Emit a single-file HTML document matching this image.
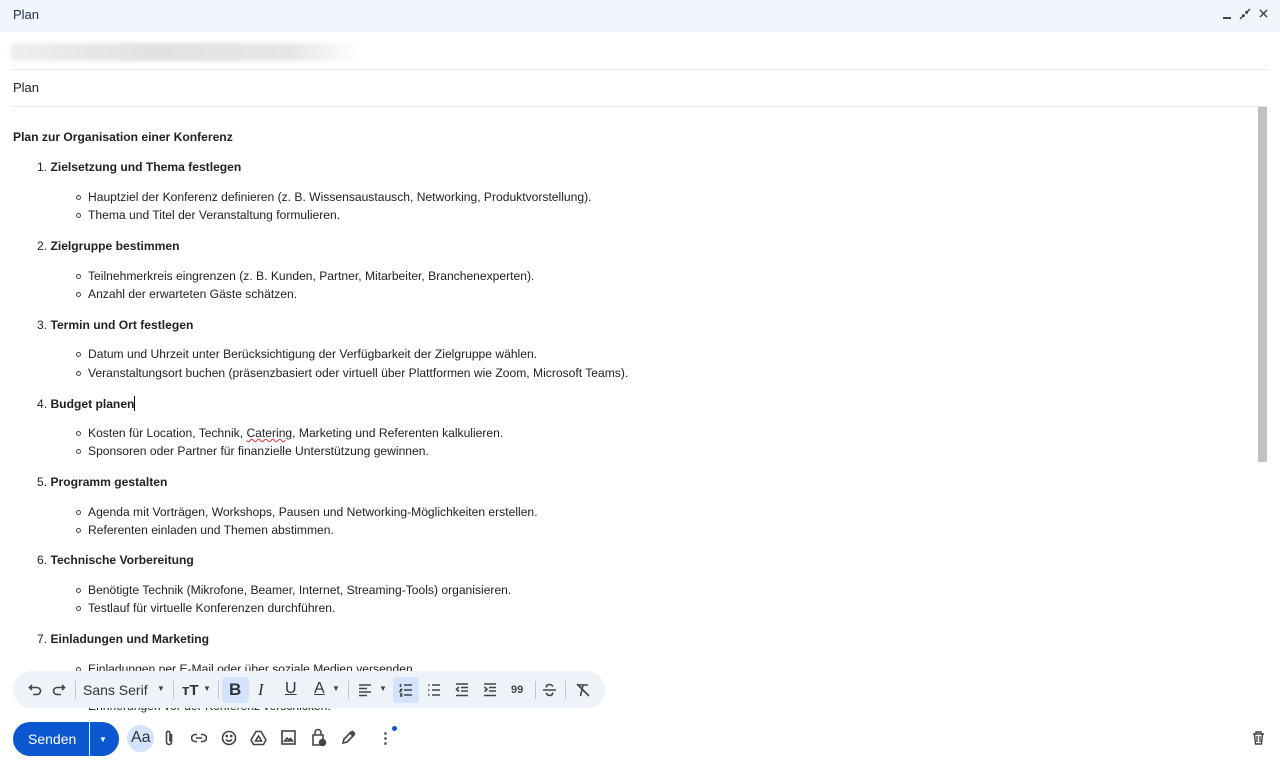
<!DOCTYPE html>
<html><head><meta charset="utf-8"><style>
*{margin:0;padding:0;box-sizing:border-box}
body{width:1280px;height:766px;overflow:hidden;background:#fff;font-family:"Liberation Sans",Arial,sans-serif;position:relative;color:#222}
.hdr{position:absolute;left:0;top:0;width:1280px;height:32px;background:#f2f6fc}
.hdr .t{position:absolute;left:13px;top:7px;font-size:13px;color:#1f3050}
.l{position:absolute;font-size:12.1px;white-space:nowrap;color:#222}
.b{font-weight:bold}
.bul{position:absolute;width:5px;height:5px;border:1px solid #444;border-radius:50%}
.sep{position:absolute;left:13px;width:1254px;height:1px;background:#e5e5e5}
.tb{position:absolute;left:13px;top:671px;width:592px;height:37px;background:#eef2f9;border-radius:19px}
.ic{position:absolute;font-size:15px;color:#444}
.vs{position:absolute;top:681px;width:1px;height:18px;background:#c4c7c5}
svg.s{position:absolute}
svg.s path,svg.s rect,svg.s circle{stroke:#444;stroke-width:1.6;fill:none}
</style></head><body>
<div class="hdr"><div class="t">Plan</div>
<div style="position:absolute;left:1223px;top:17px;width:8px;height:2px;background:#444"></div>
<svg style="position:absolute;left:1239px;top:8px" width="12" height="12" viewBox="0 0 12 12"><path d="M1 11 5 7M3 7h2v2M11 1 7 5M7 3v2h2" stroke="#444" stroke-width="1.5" fill="none"/></svg>
<svg style="position:absolute;left:1259px;top:9px" width="9" height="9" viewBox="0 0 10 10"><path d="M1 1 9 9M9 1 1 9" stroke="#444" stroke-width="1.6"/></svg>
</div>
<div style="position:absolute;left:10px;top:43px;width:350px;height:18px;background:linear-gradient(90deg,#eee,#e2e2e2 40%,#e6e6e6 80%,#fff);filter:blur(2px);border-radius:4px"></div>
<div class="sep" style="top:69px"></div>
<div class="l" style="left:13px;top:80px;font-size:13px">Plan</div>
<div class="sep" style="top:106px"></div>
<div style="position:absolute;left:1258px;top:107px;width:9px;height:355px;background:#c1c1c1"></div>
<div class="l b" style="left:13px;top:130px">Plan zur Organisation einer Konferenz</div>

<div class="l" style="left:37px;top:160px">1. <b>Zielsetzung und Thema festlegen</b></div>
<div class="bul" style="left:76px;top:195px"></div><div class="l" style="left:88px;top:190px">Hauptziel der Konferenz definieren (z. B. Wissensaustausch, Networking, Produktvorstellung).</div>
<div class="bul" style="left:76px;top:213px"></div><div class="l" style="left:88px;top:208px">Thema und Titel der Veranstaltung formulieren.</div>

<div class="l" style="left:37px;top:239px">2. <b>Zielgruppe bestimmen</b></div>
<div class="bul" style="left:76px;top:274px"></div><div class="l" style="left:88px;top:269px">Teilnehmerkreis eingrenzen (z. B. Kunden, Partner, Mitarbeiter, Branchenexperten).</div>
<div class="bul" style="left:76px;top:292px"></div><div class="l" style="left:88px;top:287px">Anzahl der erwarteten Gäste schätzen.</div>

<div class="l" style="left:37px;top:318px">3. <b>Termin und Ort festlegen</b></div>
<div class="bul" style="left:76px;top:352px"></div><div class="l" style="left:88px;top:347px">Datum und Uhrzeit unter Berücksichtigung der Verfügbarkeit der Zielgruppe wählen.</div>
<div class="bul" style="left:76px;top:371px"></div><div class="l" style="left:88px;top:366px">Veranstaltungsort buchen (präsenzbasiert oder virtuell über Plattformen wie Zoom, Microsoft Teams).</div>

<div class="l" style="left:37px;top:396px">4. <b>Budget planen</b><span style="display:inline-block;width:1px;height:15px;background:#000;vertical-align:-3px"></span></div>
<div class="bul" style="left:76px;top:431px"></div><div class="l" style="left:88px;top:426px">Kosten für Location, Technik, <span style="text-decoration:underline wavy #d33;text-decoration-thickness:1px">Catering</span>, Marketing und Referenten kalkulieren.</div>
<div class="bul" style="left:76px;top:449px"></div><div class="l" style="left:88px;top:444px">Sponsoren oder Partner für finanzielle Unterstützung gewinnen.</div>

<div class="l" style="left:37px;top:475px">5. <b>Programm gestalten</b></div>
<div class="bul" style="left:76px;top:510px"></div><div class="l" style="left:88px;top:505px">Agenda mit Vorträgen, Workshops, Pausen und Networking-Möglichkeiten erstellen.</div>
<div class="bul" style="left:76px;top:528px"></div><div class="l" style="left:88px;top:523px">Referenten einladen und Themen abstimmen.</div>

<div class="l" style="left:37px;top:553px">6. <b>Technische Vorbereitung</b></div>
<div class="bul" style="left:76px;top:588px"></div><div class="l" style="left:88px;top:583px">Benötigte Technik (Mikrofone, Beamer, Internet, Streaming-Tools) organisieren.</div>
<div class="bul" style="left:76px;top:606px"></div><div class="l" style="left:88px;top:601px">Testlauf für virtuelle Konferenzen durchführen.</div>

<div class="l" style="left:37px;top:632px">7. <b>Einladungen und Marketing</b></div>
<div class="bul" style="left:76px;top:667px"></div><div class="l" style="left:88px;top:662px">Einladungen per E-Mail oder über soziale Medien versenden.</div>
<div class="l" style="left:88px;top:699px">Erinnerungen vor der Konferenz verschicken.</div>

<div class="tb"></div>
<svg class="s" style="left:28px;top:683px" width="14" height="14" viewBox="0 0 14 14"><path d="M4 2 1.5 4.5 4 7M1.5 4.5H9a3.5 3.5 0 0 1 0 7H5"/></svg>
<svg class="s" style="left:52px;top:683px" width="14" height="14" viewBox="0 0 14 14"><path d="M10 2l2.5 2.5L10 7M12.5 4.5H5a3.5 3.5 0 0 0 0 7h4"/></svg>
<div class="vs" style="left:75px"></div>
<div class="l" style="left:83px;top:682px;font-size:14px;color:#333">Sans Serif</div>
<div class="ic" style="left:157px;top:684px;font-size:8px">▼</div>
<div class="vs" style="left:173px"></div>
<div class="l b" style="left:182px;top:682px;font-size:15px;color:#333">тT</div>
<div class="ic" style="left:203px;top:684px;font-size:8px">▼</div>
<div class="vs" style="left:218px"></div>
<div style="position:absolute;left:222px;top:677px;width:27px;height:26px;background:#d3e3fd;border-radius:4px"></div>
<div class="l b" style="left:229px;top:680px;font-size:17px;color:#333">B</div>
<div class="l" style="left:258px;top:680px;font-size:17px;font-style:italic;font-family:'Liberation Serif',serif;color:#333">I</div>
<div class="l" style="left:285px;top:680px;font-size:16px;text-decoration:underline;color:#333">U</div>
<div class="l" style="left:314px;top:680px;font-size:16px;text-decoration:underline;color:#333">A</div>
<div class="ic" style="left:332px;top:684px;font-size:8px">▼</div>
<div class="vs" style="left:348px"></div>
<svg class="s" style="left:358px;top:683px" width="14" height="14" viewBox="0 0 14 14"><path d="M1 2h12M1 5.5h8M1 9h12M1 12.5h8"/></svg>
<div class="ic" style="left:379px;top:684px;font-size:8px">▼</div>
<div style="position:absolute;left:393px;top:677px;width:26px;height:26px;background:#d3e3fd;border-radius:4px"></div>
<svg class="s" style="left:399px;top:683px" width="14" height="14" viewBox="0 0 14 14"><path d="M5 2h8M5 7h8M5 12h8M1.5 1v3M1 6.5h1.5l-1.5 2h1.5M1 11h1.5v2H1"/></svg>
<svg class="s" style="left:427px;top:683px" width="14" height="14" viewBox="0 0 14 14"><path d="M5 2h8M5 7h8M5 12h8M1 2h1.5M1 7h1.5M1 12h1.5"/></svg>
<svg class="s" style="left:455px;top:683px" width="14" height="14" viewBox="0 0 14 14"><path d="M1 1h12M6 4.5h7M6 8h7M1 12.5h12M4 4 1.5 6.3 4 8.5"/></svg>
<svg class="s" style="left:483px;top:683px" width="14" height="14" viewBox="0 0 14 14"><path d="M1 1h12M6 4.5h7M6 8h7M1 12.5h12M1.5 4 4 6.3 1.5 8.5"/></svg>
<div class="l b" style="left:511px;top:684px;font-size:11px;color:#444">99</div>
<div class="vs" style="left:535px"></div>
<svg class="s" style="left:542px;top:683px" width="15" height="14" viewBox="0 0 15 14"><path d="M1 7h13M11 3.5C10 2 8.5 1.5 7.5 1.5 5 1.5 4 3 4.5 4.5M4 10c1 1.5 2.5 2.5 3.5 2.5 2 0 3.5-1 3-3"/></svg>
<div class="vs" style="left:565px"></div>
<svg class="s" style="left:575px;top:683px" width="15" height="14" viewBox="0 0 15 14"><path d="M3 2h10M8 2 5.5 13M2 1l12 12"/></svg>

<div style="position:absolute;left:13px;top:722px;width:106px;height:34px;background:#0b57d0;border-radius:17px"></div>
<div style="position:absolute;left:89px;top:722px;width:1px;height:34px;background:#fff"></div>
<div class="l" style="left:28px;top:731px;font-size:14px;color:#fff">Senden</div>
<div class="l" style="left:99px;top:735px;font-size:8px;color:#fff">▼</div>
<div style="position:absolute;left:127px;top:725px;width:27px;height:27px;background:#d3e3fd;border-radius:50%"></div>
<div class="l" style="left:131px;top:729px;font-size:16px;color:#333">Aa</div>
<svg class="s" style="left:163px;top:730px" width="12" height="16" viewBox="0 0 12 16"><path d="M8.5 4v8a2.5 2.5 0 0 1-5 0V3a1.7 1.7 0 0 1 3.4 0v8.5"/></svg>
<svg class="s" style="left:191px;top:732px" width="16" height="12" viewBox="0 0 16 12"><path d="M6 2.5H4a3.5 3.5 0 0 0 0 7h2M10 2.5h2a3.5 3.5 0 0 1 0 7h-2M5 6h6"/></svg>
<svg class="s" style="left:221px;top:730px" width="16" height="16" viewBox="0 0 16 16"><circle cx="8" cy="8" r="6.5"/><path d="M5 9.5c1.5 2 4.5 2 6 0"/><circle cx="5.8" cy="6" r=".6"/><circle cx="10.2" cy="6" r=".6"/></svg>
<svg class="s" style="left:250px;top:730px" width="17" height="16" viewBox="0 0 17 16"><path d="M6 1.5h5l5 8.5-2.5 4.5h-10L1 10zM8.5 6l-3 5h6z"/></svg>
<svg class="s" style="left:281px;top:730px" width="15" height="15" viewBox="0 0 15 15"><rect x="1" y="1" width="13" height="13"/><path d="M3.5 11 6 8l2 2 1.5-1.5 2 2.5z"/></svg>
<svg class="s" style="left:311px;top:728px" width="16" height="19" viewBox="0 0 16 19"><path d="M4 7V4.5a3 3 0 0 1 6 0V7M2 7h10v10H2z"/><circle cx="11.5" cy="14.5" r="3" style="fill:#444"/></svg>
<svg class="s" style="left:341px;top:730px" width="15" height="15" viewBox="0 0 15 15"><path d="M2 13l1-4 7-7 3 3-7 7zM9 3l3 3M11 1l3 3"/></svg>
<div class="ic" style="left:378px;top:729px;font-weight:bold">⋮</div>
<div style="position:absolute;left:392px;top:726px;width:5px;height:5px;background:#0b57d0;border-radius:50%"></div>
<svg style="position:absolute;left:1252px;top:731px" width="13" height="14" viewBox="0 0 13 14"><path d="M1 3h11M4 3V1h5v2M2.5 3l1 10h6l1-10M5 5v6M8 5v6" stroke="#444" stroke-width="1.4" fill="none"/></svg>
</body></html>
